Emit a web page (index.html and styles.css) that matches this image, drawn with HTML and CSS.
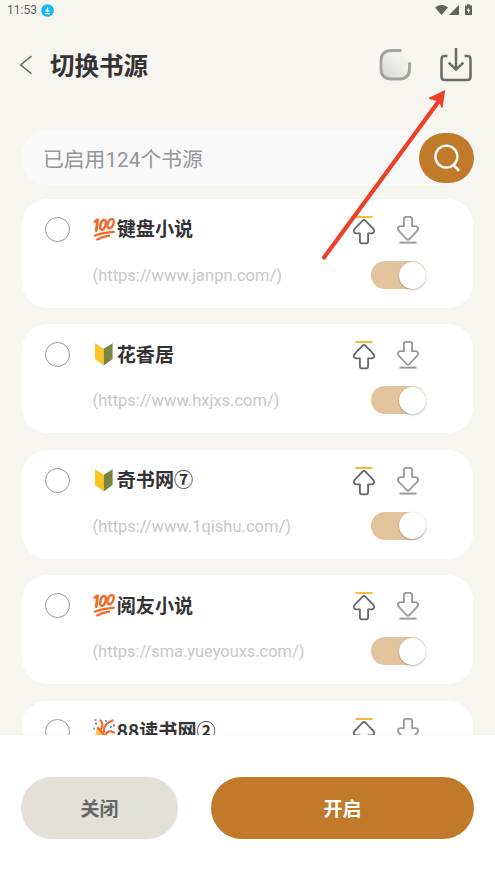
FILE: index.html
```
<!DOCTYPE html>
<html lang="zh-CN">
<head>
<meta charset="utf-8">
<title>切换书源</title>
<link rel="stylesheet" href="styles.css">
</head>
<body>
<svg class="defs" aria-hidden="true">
  <symbol id="hundred" viewBox="0 0 24 24">
    <g fill="none" stroke="#ee6c2d" stroke-linecap="round" stroke-linejoin="round">
      <path stroke-width="2.8" d="M2.8 4.6L5.6 2.8L4.3 13.6"/>
      <ellipse cx="11" cy="7.9" rx="2.5" ry="5" stroke-width="2.5" transform="rotate(16 11 7.9)"/>
      <ellipse cx="18.6" cy="6.6" rx="2.7" ry="4.9" stroke-width="2.5" transform="rotate(22 18.6 6.6)"/>
      <path stroke-width="2.4" d="M3 18.6Q11 15.4 21.7 14.9"/>
      <path stroke-width="2.3" d="M5.2 22.4Q10 19.6 17 18.6"/>
    </g>
  </symbol>
  <symbol id="leaf" viewBox="0 0 24 24">
    <path fill="#fdc323" d="M3 1.2L11.8 6.8V23.6L3 17Z"/>
    <path fill="#798443" d="M20.6 1.2L11.8 6.8V23.6L20.6 17Z"/>
  </symbol>
  <symbol id="party" viewBox="0 0 24 24">
    <path fill="#fcc43a" d="M5.5 7.5L15 19L2 23Z"/>
    <g fill="none" stroke="#ee6c35" stroke-width="2.2" stroke-linecap="round">
      <path d="M8.5 2.5Q12 6 9 11M12 14Q11 6 20.5 2.5M14 16Q16 11.5 22 14.5M6 10L12 17"/>
    </g>
    <g fill="#42bfe0"><rect x="2.5" y="1" width="2" height="2"/><rect x="13" y="2" width="2" height="2"/><rect x="1" y="9.5" width="2" height="2"/><rect x="18" y="8" width="2" height="2"/></g>
    <g fill="#d9578a"><rect x="3" y="4.5" width="2" height="2"/><rect x="21" y="6.5" width="2" height="2"/></g>
  </symbol>
  <symbol id="up" viewBox="0 0 24 30">
    <path d="M3.5 2H20.5" stroke="#fbb837" stroke-width="2"/>
    <path d="M10.6 5.6Q12 4.4 13.4 5.6L21.6 14.2Q23.4 18 19.5 18.4H16.1V26.2Q16.1 28.3 14 28.3H10Q7.9 28.3 7.9 26.2V18.4H4.5Q.6 18 2.4 14.2Z" fill="none" stroke="#666" stroke-width="1.8" stroke-linejoin="round"/>
  </symbol>
  <symbol id="down" viewBox="0 0 24 30">
    <path d="M3.5 27.6H20.5" stroke="#999" stroke-width="2"/>
    <path d="M10.6 24Q12 25.2 13.4 24L21.6 15.4Q23.4 11.6 19.5 11.2H16.1V3.6Q16.1 1.8 14.1 1.8H9.9Q7.9 1.8 7.9 3.6V11.2H4.5Q.6 11.6 2.4 15.4Z" fill="none" stroke="#999" stroke-width="1.8" stroke-linejoin="round"/>
  </symbol>
</svg>
<div class="screen">
  <div class="status">
    <span class="time">11:53</span>
    <svg width="13" height="13" viewBox="0 0 13 13"><circle cx="6.5" cy="6.5" r="6.3" fill="#11b7f8"/><path d="M6.5 2.8V7.5M4.5 5.8L6.5 7.8L8.5 5.8M4 9.6H9" fill="none" stroke="#fff" stroke-width="1.2"/></svg>
    <svg class="signals" width="38" height="13" viewBox="0 0 38 13"><g fill="#62615e"><path d="M0 3.5Q6.5-1.3 13 3.5L6.5 11Z"/><path d="M14 11L24 1V11Z"/><path d="M30 1.5H32V.3H35V1.5H37V11H30Z"/></g><path d="M33.5 3.3L31.6 7H33V9.5L35.4 5.8H34Z" fill="#f6f5f0"/></svg>
  </div>
  <header class="header">
    <svg class="back" width="14" height="20" viewBox="0 0 14 20"><path d="M12.4 1.2L1.7 10L12.4 18.7" fill="none" stroke="#666" stroke-width="1.5"/></svg>
    <h1>切换书源</h1>
    <svg class="loader" width="34" height="34" viewBox="0 0 34 34">
      <defs><linearGradient id="shade" x1="0" y1="1" x2="1" y2="0"><stop offset="0" stop-color="#d4d4d2"/><stop offset=".6" stop-color="#eeeeeb"/><stop offset="1" stop-color="#f6f5f0"/></linearGradient></defs>
      <path d="M21.5 2.5H13Q2 2.5 2 13V21Q2 31 13 31H20Q30.5 31 30.5 21V15.3" fill="url(#shade)"/>
      <path d="M21.5 2.5H13Q2 2.5 2 13V21Q2 31 13 31H20Q30.5 31 30.5 21V15.3" fill="none" stroke="#a2a2a1" stroke-width="2.8" stroke-linecap="round"/>
    </svg>
    <svg class="import" width="34" height="36" viewBox="0 0 34 36"><path d="M8.5 9H5.7Q2.5 9 2.5 12.2V29.5Q2.5 33 5.7 33H28.3Q31.5 33 31.5 29.5V12.2Q31.5 9 28.3 9H25.5M17 1V22.3M9.7 15.7L17 22.6L24.3 15.7" fill="none" stroke="#6b6a68" stroke-width="2.5"/></svg>
  </header>
  <div class="search">
    <span>已启用124个书源</span>
    <div class="search-btn"><svg width="28" height="30" viewBox="0 0 28 30"><circle cx="13.4" cy="13.6" r="11" fill="none" stroke="#fff" stroke-width="2.3"/><path d="M21 22.3L25.3 27" stroke="#fff" stroke-width="2.6" stroke-linecap="round"/></svg></div>
  </div>
  <main class="list">
    <article class="card">
      <i class="radio"></i>
      <div class="info"><h2><svg class="emoji"><use href="#hundred"/></svg>键盘小说</h2><p>(https://www.janpn.com/)</p></div>
      <div class="actions"><div class="moves"><svg><use href="#up"/></svg><svg><use href="#down"/></svg></div><div class="toggle"><b></b></div></div>
    </article>
    <article class="card">
      <i class="radio"></i>
      <div class="info"><h2><svg class="emoji"><use href="#leaf"/></svg>花香居</h2><p>(https://www.hxjxs.com/)</p></div>
      <div class="actions"><div class="moves"><svg><use href="#up"/></svg><svg><use href="#down"/></svg></div><div class="toggle"><b></b></div></div>
    </article>
    <article class="card">
      <i class="radio"></i>
      <div class="info"><h2><svg class="emoji"><use href="#leaf"/></svg>奇书网⑦</h2><p>(https://www.1qishu.com/)</p></div>
      <div class="actions"><div class="moves"><svg><use href="#up"/></svg><svg><use href="#down"/></svg></div><div class="toggle"><b></b></div></div>
    </article>
    <article class="card">
      <i class="radio"></i>
      <div class="info"><h2><svg class="emoji"><use href="#hundred"/></svg>阅友小说</h2><p class="long">(https://sma.yueyouxs.com/)</p></div>
      <div class="actions"><div class="moves"><svg><use href="#up"/></svg><svg><use href="#down"/></svg></div><div class="toggle"><b></b></div></div>
    </article>
    <article class="card">
      <i class="radio"></i>
      <div class="info"><h2><svg class="emoji"><use href="#party"/></svg>88读书网②</h2></div>
      <div class="actions"><div class="moves"><svg><use href="#up"/></svg><svg><use href="#down"/></svg></div></div>
    </article>
  </main>
  <footer class="footer">
    <button class="close">关闭</button>
    <button class="open">开启</button>
  </footer>
  <svg class="pointer" width="126" height="174" viewBox="0 0 126 174"><path d="M4 167.5L117.5 13" stroke="#ee4029" stroke-width="4.2" stroke-linecap="round"/><path d="M125.2 0L109 7.8Q108.6 9 110 9.2L115.6 10.8L120.2 14.4L121.4 17.4Q122.3 18.4 122.7 17Z" fill="#ee4029"/></svg>
</div>
</body>
</html>
```
FILE: styles.css
```
* { box-sizing: border-box; margin: 0; padding: 0; }
body { background: #f6f5f0; font-family: Roboto, "Noto Sans CJK SC", sans-serif; }
svg { display: block; flex: none; }
.defs { position: absolute; width: 0; height: 0; }
.screen { position: relative; width: 495px; height: 880px; display: flex; flex-direction: column; overflow: hidden; }
.status { height: 20px; display: flex; align-items: center; padding: 0 22px 0 7px; gap: 4px; flex: none; }
.time { font-size: 12px; line-height: 20px; color: #62615e; width: 29.5px; white-space: nowrap; }
.signals { margin-left: auto; }
.header { height: 90px; flex: none; display: flex; align-items: center; padding: 0 22px 0 19px; }
.header h1 { font: 700 24.5px/36px "Noto Sans CJK SC", sans-serif; color: #333; margin-left: 17px; flex: 1; }
.loader { margin-bottom: 1px; }
.import { margin-left: 26px; }
.search { height: 55px; flex: none; margin: 20px 21px 14px 21px; border-radius: 27px; background: #f9f9f9; display: flex; align-items: center; justify-content: space-between; padding-left: 22px; color: #95939b; font-size: 20.8px; }
.search-btn { width: 55px; height: 50px; margin-top: 1px; background: #c17a2a; border-radius: 25px; display: flex; align-items: center; justify-content: center; }
.list { flex: 1; min-height: 0; overflow: hidden; display: flex; flex-direction: column; gap: 16.4px; margin: 0 22px; }
.card { height: 109px; flex: none; background: #fff; border-radius: 25px; display: flex; padding: 0 47px 0 23px; }
.radio { width: 25px; height: 25px; border: 1px solid #999; border-radius: 50%; margin-top: 18px; flex: none; }
.info { margin-left: 22.5px; flex: 1; }
.info h2 { display: flex; align-items: center; height: 28px; margin-top: 15.4px; font: 700 19.1px/28px "Noto Sans CJK SC", sans-serif; color: #333; white-space: nowrap; }
.emoji { width: 24px; height: 24px; margin: 1px 1.2px 0 -1px; }
.info p { margin-top: 21.6px; font-size: 16.5px; line-height: 24px; color: #c7c7cb; white-space: nowrap; }
.info .long { font-size: 16.4px; }
.actions { width: 74px; flex: none; display: flex; flex-direction: column; align-items: flex-end; }
.moves { display: flex; gap: 20px; margin: 16px 6.4px 0 0; }
.moves svg { width: 24px; height: 30px; }
.toggle { width: 55.5px; height: 28px; margin-top: 16px; border-radius: 14px; background: #e2c39c; display: flex; justify-content: flex-end; align-items: center; padding-right: .5px; }
.toggle b { width: 27px; height: 27px; border-radius: 50%; background: #fff; box-shadow: 0 1px 2px rgba(0,0,0,.28); }
.footer { height: 145px; flex: none; background: #fff; display: flex; gap: 33px; padding: 42px 21px 0; position: relative; box-shadow: 0 -1px 3px rgba(0,0,0,.03); }
.footer button { height: 62px; border: 0; border-radius: 31px; font: 700 19px/28px "Noto Sans CJK SC", sans-serif; }
.close { width: 157px; background: #e3e0d8; color: #666; }
.open { flex: 1; background: #c17a2a; color: #fff; }
.pointer { position: absolute; left: 320px; top: 90px; }
```
